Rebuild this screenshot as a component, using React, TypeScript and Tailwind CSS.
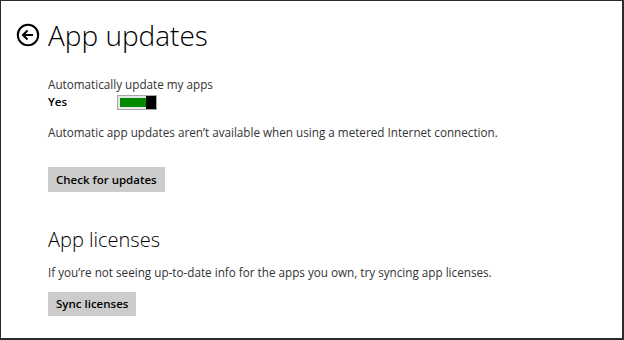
import React from "react";

function BackIcon() {
  return (
    <svg width="24" height="24" viewBox="0 0 24 24" className="block">
      <circle cx="12" cy="12" r="10.2" fill="none" stroke="#000" strokeWidth="2" />
      <path d="M17 12H7.5M11.5 7.5L7 12l4.5 4.5" fill="none" stroke="#000" strokeWidth="2" strokeLinecap="butt" strokeLinejoin="miter" />
    </svg>
  );
}

export default function App() {
  return (
    <div
      className="w-[624px] h-[340px] bg-white border-t border-l border-r-2 border-b-2 border-[#2b2b2b] text-black overflow-hidden"
      style={{ fontFamily: '"Open Sans", "Noto Sans", sans-serif' }}
    >
      <div className="flex items-center pt-[14px] pl-[15px]">
        <BackIcon />
        <h1 className="ml-[8px] text-[28px] leading-[40px] font-light">App updates</h1>
      </div>
      <div className="pl-[47px]">
        <div className="mt-[21px] text-[11.7px] leading-[16px] text-[#333]">Automatically update my apps</div>
        <div className="flex items-center mt-[2px]">
          <span className="w-[69px] text-[11.5px] leading-[16px] font-semibold">Yes</span>
          <div className="flex w-[40px] h-[15px] border border-[#a8a8a8] bg-[#e8e8e8]">
            <div className="flex-1 m-[2px] mr-0 bg-[#008a00]" />
            <div className="w-[10px] bg-black" />
          </div>
        </div>
        <div className="mt-[14px] text-[11.7px] leading-[16px] text-[#333]">
          Automatic app updates aren’t available when using a metered Internet connection.
        </div>
        <button className="mt-[27px] block h-[25px] px-[8px] bg-[#cccccc] text-[11.5px] font-semibold text-black">
          Check for updates
        </button>
        <h2 className="mt-[34px] text-[20px] leading-[28px] font-light">App licenses</h2>
        <div className="mt-[10px] text-[11.7px] leading-[16px] text-[#333]">
          If you’re not seeing up-to-date info for the apps you own, try syncing app licenses.
        </div>
        <button className="mt-[12px] block h-[24px] px-[8px] bg-[#cccccc] text-[11.5px] font-semibold text-black">
          Sync licenses
        </button>
      </div>
    </div>
  );
}
